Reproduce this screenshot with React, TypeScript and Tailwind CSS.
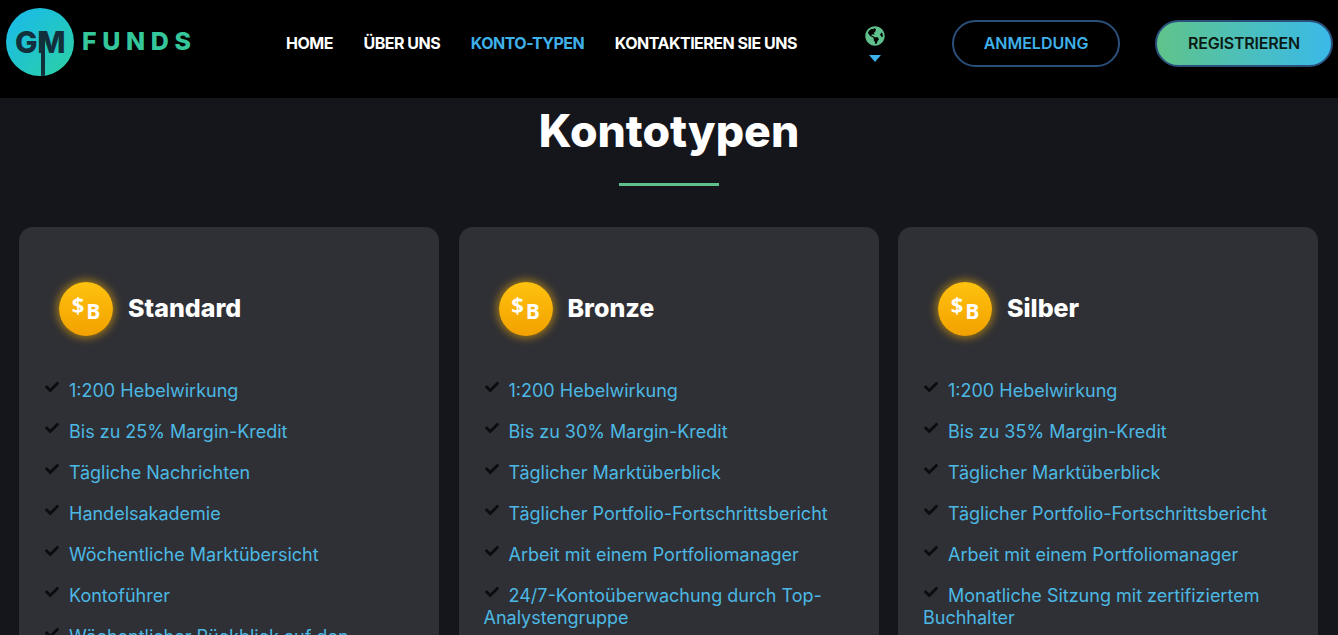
import { FaCheck, FaGlobeAmericas } from 'react-icons/fa';

const navLinks = [
  { label: 'HOME', active: false },
  { label: 'ÜBER UNS', active: false },
  { label: 'KONTO-TYPEN', active: true },
  { label: 'KONTAKTIEREN SIE UNS', active: false },
];

const plans = [
  {
    name: 'Standard',
    items: [
      '1:200 Hebelwirkung',
      'Bis zu 25% Margin-Kredit',
      'Tägliche Nachrichten',
      'Handelsakademie',
      'Wöchentliche Marktübersicht',
      'Kontoführer',
      'Wöchentlicher Rückblick auf den Portfolio-Fortschritt',
    ],
  },
  {
    name: 'Bronze',
    items: [
      '1:200 Hebelwirkung',
      'Bis zu 30% Margin-Kredit',
      'Täglicher Marktüberblick',
      'Täglicher Portfolio-Fortschrittsbericht',
      'Arbeit mit einem Portfoliomanager',
      '24/7-Kontoüberwachung durch Top-Analystengruppe',
    ],
  },
  {
    name: 'Silber',
    items: [
      '1:200 Hebelwirkung',
      'Bis zu 35% Margin-Kredit',
      'Täglicher Marktüberblick',
      'Täglicher Portfolio-Fortschrittsbericht',
      'Arbeit mit einem Portfoliomanager',
      'Monatliche Sitzung mit zertifiziertem Buchhalter',
    ],
  },
];

function Logo() {
  return (
    <div className="flex items-center w-[286px] pl-[6px] shrink-0 -mt-[3px]">
      <div className="relative flex items-center justify-center w-[68px] h-[68px] rounded-full bg-gradient-to-br from-[#1cb8ee] to-[#2fd0a0] overflow-hidden">
        <span className="text-[30px] font-extrabold leading-none tracking-[-0.5px] text-[#12303c]">
          GM
        </span>
        <div className="absolute left-[35px] top-[27px] w-[4px] h-[41px] bg-[#12303c]" />
      </div>
      <span className="ml-[8px] pb-[1px] text-[25px] font-extrabold leading-none tracking-[5.6px] text-[#35c79c]">
        FUNDS
      </span>
    </div>
  );
}

function Coin() {
  return (
    <div className="flex justify-center w-[54px] h-[54px] rounded-full bg-gradient-to-b from-[#ffc20e] to-[#f2a100] shadow-[0_0_8px_2px_rgba(255,180,0,0.55)] text-white font-['Open_Sans',sans-serif] font-bold leading-none shrink-0">
      <span className="text-[22px] mt-[11px] mr-[2px]">$</span>
      <span className="text-[21px] mt-[19px]">B</span>
    </div>
  );
}

function PlanCard({ name, items }: { name: string; items: string[] }) {
  return (
    <div className="flex-1 rounded-[14px] bg-[#2f3035] px-[25px] pt-[55px] pb-8">
      <div className="flex items-center gap-[15px] pl-[15px] mb-[44px]">
        <Coin />
        <h3 className="pb-[2px] text-[25px] font-extrabold leading-none text-white">{name}</h3>
      </div>
      <ul className="text-[18px] leading-[21.5px] text-[#4cb8e4]">
        {items.map((item) => (
          <li key={item} className="mb-[19.5px]">
            <FaCheck className="inline-block align-[3px] w-[16px] h-[14px] mr-[9px] text-[#0b0c0f]" />
            {item}
          </li>
        ))}
      </ul>
    </div>
  );
}

export default function App() {
  return (
    <div className="h-screen overflow-hidden bg-[#15161c] font-['Inter',sans-serif]">
      {/* Top bar */}
      <header className="flex items-center h-[98px] pb-[11px] bg-black">
        <Logo />
        <nav className="flex gap-[30.6px] pb-[1px] w-[560px] shrink-0">
          {navLinks.map(({ label, active }) =>
            active ? (
              <a key={label} className="text-[16px] font-bold tracking-[-0.5px] text-[#3fb0ea]">
                {label}
              </a>
            ) : (
              <a key={label} className="text-[16px] font-bold tracking-[-0.5px] text-white">
                {label}
              </a>
            ),
          )}
        </nav>
        <div className="flex flex-col items-center w-[20px] ml-[19px] mr-[67px] pt-[1px] shrink-0">
          <FaGlobeAmericas className="w-[20px] h-[20px] text-[#5fc08c]" />
          <div className="mt-[9px] w-0 h-0 border-x-[6.5px] border-x-transparent border-t-[7px] border-t-[#3fb0ea]" />
        </div>
        <a className="flex items-center justify-center w-[168px] h-[47px] pb-[1px] rounded-full border-2 border-[#2a4f7a] text-[16px] font-semibold text-[#3fb0ea]">
          ANMELDUNG
        </a>
        <a className="flex items-center justify-center ml-[35px] w-[178px] h-[47px] pb-[1px] rounded-full border-2 border-[#2a4f7a] bg-gradient-to-r from-[#5fc389] to-[#3ab9e8] text-[16px] font-semibold tracking-[-0.2px] text-[#0c1a14]">
          REGISTRIEREN
        </a>
      </header>

      {/* Account types */}
      <section className="px-[19px]">
        <h2 className="mt-[4px] text-center text-[44.6px] leading-[58px] font-extrabold text-white">Kontotypen</h2>
        <div className="mx-auto mt-[23px] mb-[41px] w-[100px] h-[3px] bg-[#5fc08c]" />
        <div className="flex gap-[19.5px] pr-[1px]">
          {plans.map((plan) => (
            <PlanCard key={plan.name} {...plan} />
          ))}
        </div>
      </section>
    </div>
  );
}
